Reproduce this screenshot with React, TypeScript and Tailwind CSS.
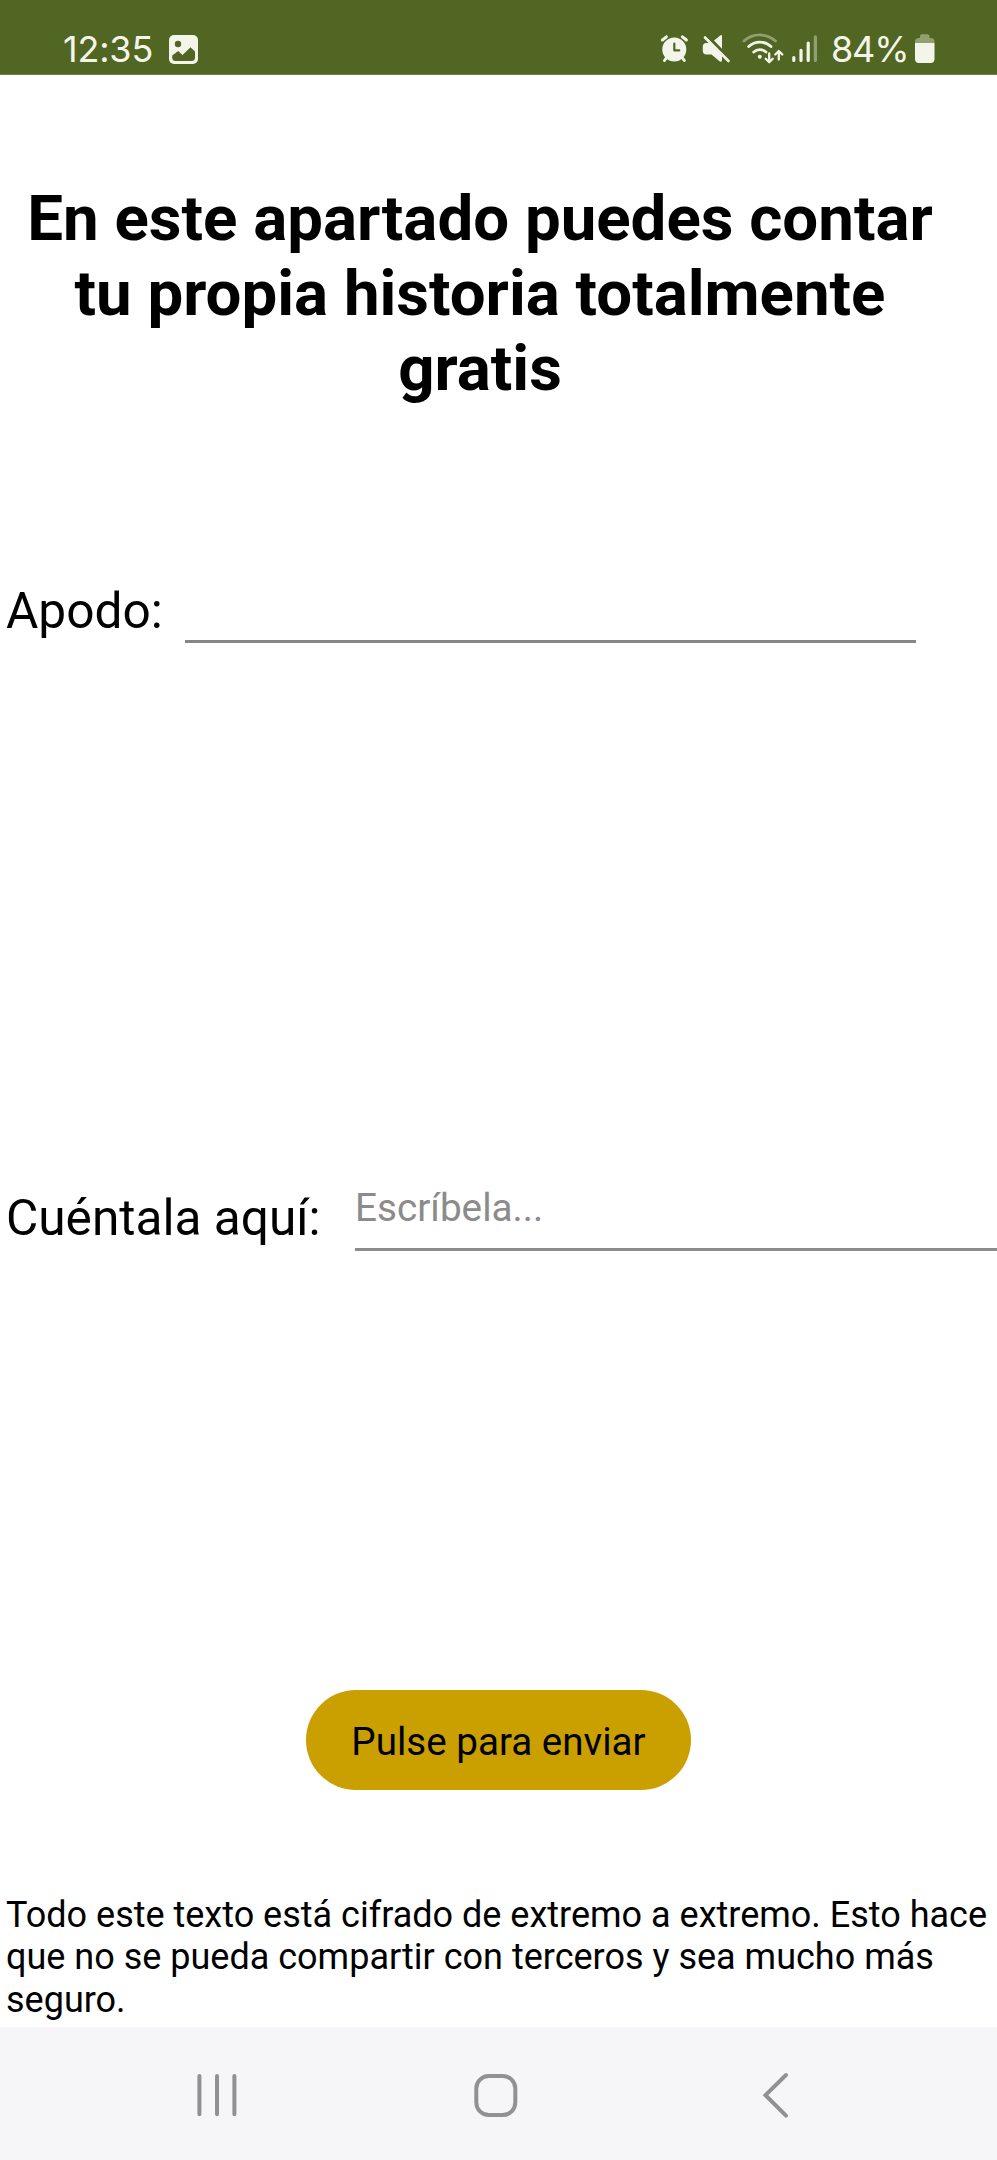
import React from "react";

function PictureIcon() {
  return (
    <svg className="block h-[29px] w-[29px]" viewBox="0 0 29 29">
      <rect width="29" height="29" rx="5" fill="#f3f5ea" />
      <circle cx="9" cy="9" r="3.2" fill="#526623" />
      <path d="M3.2 20.5 L9.2 16 L13.5 20 L21.5 12.3 L26 16.5 V22.5 Q26 26 22.5 26 H6.5 Q3.2 26 3.2 22.5 Z" fill="#526623" />
    </svg>
  );
}

function StatusIcons() {
  return (
    <svg className="block h-[36px] w-[160px]" viewBox="660 30 160 36" fill="none" stroke="#f3f5ea" strokeLinecap="round">
      <circle cx="674.3" cy="49.6" r="12" fill="#f3f5ea" stroke="none" />
      <path d="M662.4 40 L666.4 36.8 M686.4 40 L682.4 36.8" strokeWidth="3" />
      <path d="M667 57 L664.5 60.5 M681.8 57 L684.3 60.5" strokeWidth="3" />
      <path d="M674.3 43.5 V50.3 H679.3" stroke="#526623" strokeWidth="2.2" strokeLinejoin="round" />
      <path d="M714 40.5 L720.5 35.3 Q722 34.5 722 36.5 V48.8 Z" fill="#f3f5ea" stroke="none" />
      <path d="M706.5 43 H709.5 L722 55.8 V60.5 Q721.5 62.5 719.5 61.3 L711.5 54.4 H706.5 Q702.8 54.4 702.8 51 V46.5 Q702.8 43 706.5 43 Z" fill="#f3f5ea" stroke="none" />
      <path d="M705 37.5 L728.5 61" strokeWidth="2.6" />
      <path d="M707.2 36 L730.7 59.5" stroke="#526623" strokeWidth="1.3" />
      <path d="M744 41 A23.5 23.5 0 0 1 775.5 41" strokeWidth="2.8" opacity="0.4" />
      <path d="M748.7 46.6 A16.2 16.2 0 0 1 771 46.6" strokeWidth="2.8" />
      <path d="M753.7 52 A9.2 9.2 0 0 1 766 52" strokeWidth="2.8" />
      <circle cx="759.8" cy="56.8" r="2" fill="#f3f5ea" stroke="none" />
      <path d="M769.2 53.5 V62 M765.7 58.8 L769.2 62.2 L772.7 58.8" strokeWidth="2.3" strokeLinejoin="round" />
      <path d="M778.8 59.5 V51.5 M775.3 54.5 L778.8 51 L782.3 54.5" strokeWidth="2.3" strokeLinejoin="round" />
      <path d="M793.8 57.5 V60.5 M801 50.3 V60.5 M808.2 43 V60.5" strokeWidth="3.2" />
      <path d="M815.4 36.8 V60.5" strokeWidth="3.2" opacity="0.4" />
    </svg>
  );
}

function BatteryIcon() {
  return (
    <svg className="block h-[30px] w-[20px]" viewBox="0 0 20 30">
      <path d="M0 9 V8 Q0 4 4 4 H5 V2.2 Q5 0.3 7 0.3 H12.5 Q14.5 0.3 14.5 2.2 V4 H15.5 Q19.5 4 19.5 8 V9 Z" fill="#f3f5ea" opacity="0.4" />
      <path d="M0 9 H19.5 V25 Q19.5 29 15.5 29 H4 Q0 29 0 25 Z" fill="#f3f5ea" />
    </svg>
  );
}

function StatusBar() {
  return (
    <header className="flex h-[75px] shrink-0 items-start border-b border-[#747d56] bg-[#526623] font-['Inter',sans-serif] text-[36px] leading-[44px] text-[#f3f5ea]">
      <span className="ml-[63px] mt-[27px] w-[106px] tracking-[-0.2px]">12:35</span>
      <span className="mt-[35px]"><PictureIcon /></span>
      <span className="ml-[462px] mt-[30px]"><StatusIcons /></span>
      <span className="ml-[11px] mt-[27px] w-[84px] whitespace-nowrap tracking-[-1.2px]">84%</span>
      <span className="mt-[34px]"><BatteryIcon /></span>
    </header>
  );
}

function NavigationBar() {
  return (
    <nav className="flex h-[133px] shrink-0 items-start bg-[#f6f6f8] pt-[44px] pl-[195px]">
      <svg className="block h-[48px] w-[44px]" viewBox="195 2071 44 48" stroke="#919191" strokeWidth="4" strokeLinecap="round">
        <path d="M199.4 2076 V2114.3 M217 2076 V2114.3 M234.4 2076 V2114.3" />
      </svg>
      <svg className="ml-[234px] block h-[48px] w-[46px]" viewBox="473 2071 46 48" fill="none" stroke="#919191" strokeWidth="4">
        <rect x="476.3" y="2076" width="39" height="39" rx="12.5" />
      </svg>
      <svg className="ml-[242px] block h-[48px] w-[32px]" viewBox="761 2071 32 48" fill="none" stroke="#919191" strokeWidth="4" strokeLinecap="round">
        <path d="M786 2075 L765.5 2095.2 L786 2115.6" />
      </svg>
    </nav>
  );
}

export default function App() {
  return (
    <div className="flex h-[2160px] w-[997px] flex-col overflow-hidden bg-white font-['Roboto',sans-serif] text-black">
      <StatusBar />
      <main className="flex h-[1952px] shrink-0 flex-col">
        <h1 className="mt-[106px] w-[960px] text-center text-[63.6px] leading-[75px] font-bold">
          En este apartado puedes contar
          <br />
          tu propia historia totalmente
          <br />
          gratis
        </h1>
        <label className="mt-[175px] flex h-[62px] items-start">
          <span className="w-[185px] pl-[6px] text-[49.6px] leading-[60px]">Apodo:</span>
          <input type="text" className="h-[62px] w-[731px] border-b-3 border-[#868686] outline-none" />
        </label>
        <label className="mt-[530px] flex h-[78px] items-start">
          <span className="w-[355px] pt-[15px] pl-[6px] text-[49.6px] leading-[60px] whitespace-nowrap">Cuéntala aquí:</span>
          <input
            type="text"
            placeholder="Escríbela..."
            className="h-[78px] w-[642px] border-b-3 border-[#8b8b8b] pb-[6px] text-[38.7px] leading-[46px] outline-none placeholder:text-[#8b8b8b]"
          />
        </label>
        <button className="mt-[439px] ml-[306px] h-[100px] w-[385px] rounded-full bg-[#caa000] pt-[3px] text-[38.6px] leading-[46px]">
          Pulse para enviar
        </button>
        <p className="mt-[104px] pl-[6px] text-[36px] leading-[42.3px]">
          Todo este texto está cifrado de extremo a extremo. Esto hace
          <br />
          que no se pueda compartir con terceros y sea mucho más
          <br />
          seguro.
        </p>
      </main>
      <NavigationBar />
    </div>
  );
}
